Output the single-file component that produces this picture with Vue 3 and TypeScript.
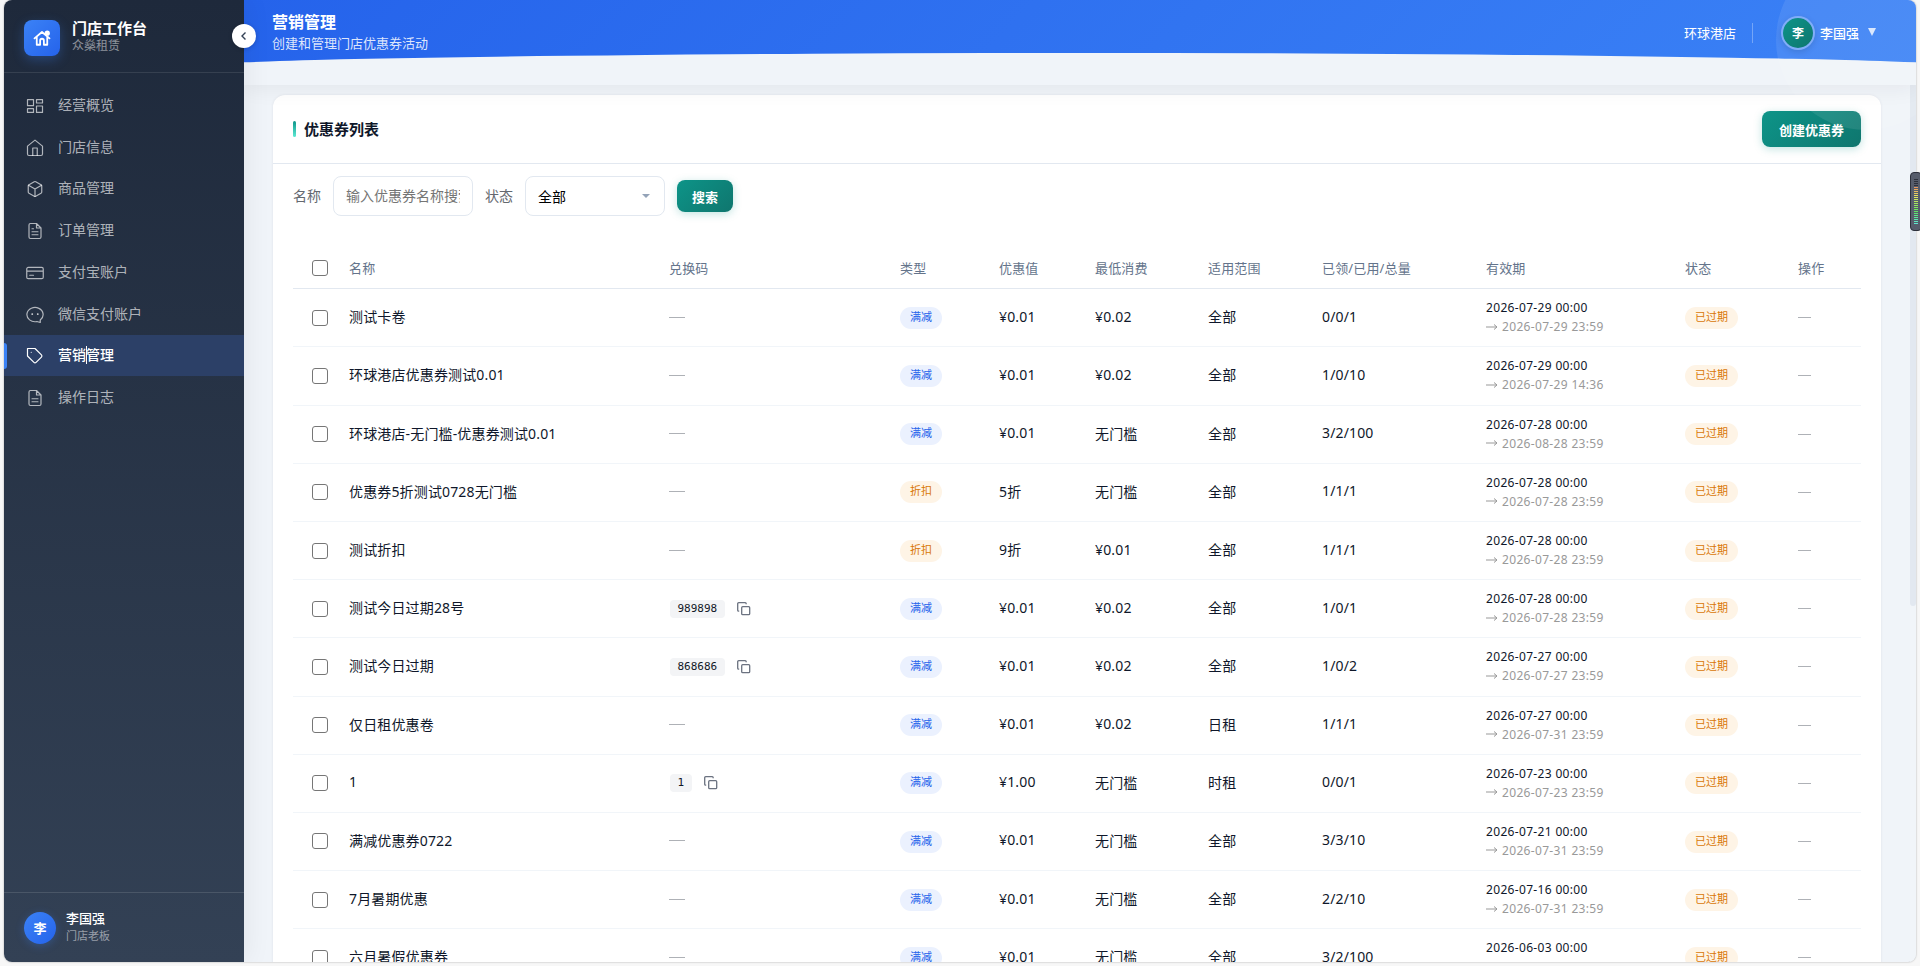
<script setup lang="ts">
interface MenuItem { label: string; icon: string[] }
interface Coupon {
  name: string
  code: string
  type: string
  value: string
  min: string
  scope: string
  usage: string
  from: string
  to: string
}

const doc = 'M14 2H6a2 2 0 0 0-2 2v16a2 2 0 0 0 2 2h12a2 2 0 0 0 2-2V8zM14 2v6h6'

const menu: MenuItem[] = [
  { label: '经营概览', icon: ['M2 3.5h8v8H2zM14 3.5h8v4.5h-8zM14 12h8v8.5h-8zM2 15.5h8v5H2z'] },
  { label: '门店信息', icon: ['M2 9.500L12 1.500l10 8V20a2 2 0 0 1-2 2H4a2 2 0 0 1-2-2z', 'M9 22V12h6v10'] },
  { label: '商品管理', icon: ['M21 16V8a2 2 0 0 0-1-1.730l-7-4a2 2 0 0 0-2 0l-7 4A2 2 0 0 0 3 8v8a2 2 0 0 0 1 1.730l7 4a2 2 0 0 0 2 0l7-4A2 2 0 0 0 21 16z', 'M3.300 7L12 12l8.700-5M12 22V12'] },
  { label: '订单管理', icon: [doc, 'M16 13H8M16 17H8M10 9H8'] },
  { label: '支付宝账户', icon: ['M3 4.500h18a2 2 0 0 1 2 2v11a2 2 0 0 1-2 2H3a2 2 0 0 1-2-2v-11a2 2 0 0 1 2-2zM1 9.500h22M5 15h5'] },
  { label: '微信支付账户', icon: ['M19 18.700V22l-4.500-1.300A10.800 9.500 0 1 1 19 18.700z', 'M8.300 10.300v.8M15.700 10.300v.8', 'M7.800 10.700h1M15.200 10.700h1'] },
  { label: '营销管理', icon: ['M20.590 13.410l-7.170 7.170a2 2 0 0 1-2.830 0L2 12V2h10l8.590 8.590a2 2 0 0 1 0 2.820z', 'M7 7h.01'] },
  { label: '操作日志', icon: [doc, 'M16 13H8M16 17H8'] },
]
const active = '营销管理'

const columns = ['名称', '兑换码', '类型', '优惠值', '最低消费', '适用范围', '已领/已用/总量', '有效期', '状态', '操作']

const row = (name: string, code: string, type: string, value: string, min: string, scope: string, usage: string, from: string, to: string): Coupon =>
  ({ name, code, type, value, min, scope, usage, from, to })

const coupons: Coupon[] = [
  row('测试卡卷', '', '满减', '¥0.01', '¥0.02', '全部', '0/0/1', '2026-07-29 00:00', '2026-07-29 23:59'),
  row('环球港店优惠券测试0.01', '', '满减', '¥0.01', '¥0.02', '全部', '1/0/10', '2026-07-29 00:00', '2026-07-29 14:36'),
  row('环球港店-无门槛-优惠券测试0.01', '', '满减', '¥0.01', '无门槛', '全部', '3/2/100', '2026-07-28 00:00', '2026-08-28 23:59'),
  row('优惠券5折测试0728无门槛', '', '折扣', '5折', '无门槛', '全部', '1/1/1', '2026-07-28 00:00', '2026-07-28 23:59'),
  row('测试折扣', '', '折扣', '9折', '¥0.01', '全部', '1/1/1', '2026-07-28 00:00', '2026-07-28 23:59'),
  row('测试今日过期28号', '989898', '满减', '¥0.01', '¥0.02', '全部', '1/0/1', '2026-07-28 00:00', '2026-07-28 23:59'),
  row('测试今日过期', '868686', '满减', '¥0.01', '¥0.02', '全部', '1/0/2', '2026-07-27 00:00', '2026-07-27 23:59'),
  row('仅日租优惠卷', '', '满减', '¥0.01', '¥0.02', '日租', '1/1/1', '2026-07-27 00:00', '2026-07-31 23:59'),
  row('1', '1', '满减', '¥1.00', '无门槛', '时租', '0/0/1', '2026-07-23 00:00', '2026-07-23 23:59'),
  row('满减优惠券0722', '', '满减', '¥0.01', '无门槛', '全部', '3/3/10', '2026-07-21 00:00', '2026-07-31 23:59'),
  row('7月暑期优惠', '', '满减', '¥0.01', '无门槛', '全部', '2/2/10', '2026-07-16 00:00', '2026-07-31 23:59'),
  row('六月暑假优惠券', '', '满减', '¥0.01', '无门槛', '全部', '3/2/100', '2026-06-03 00:00', '2026-06-30 23:59'),
]
</script>

<template>
  <div class="desktop">
    <div class="window">
      <aside class="sidebar">
        <div class="brand">
          <div class="brand-logo">
            <svg viewBox="0 0 24 24" width="18" height="18">
              <path d="M2 12.500L12 4l10 8.500M5 10.500V21h4.500v-5.500a2.500 2.500 0 0 1 5 0V21H19V10.500" />
              <circle cx="19" cy="5.500" r="3.500" />
            </svg>
          </div>
          <div class="brand-text">
            <div class="brand-name">门店工作台</div>
            <div class="brand-sub">众燊租赁</div>
          </div>
        </div>
        <nav class="menu">
          <a v-for="m in menu" :key="m.label" class="item" :class="{ active: m.label === active }">
            <svg viewBox="0 0 24 24" width="18" height="18"><path v-for="(d, i) in m.icon" :key="i" :d="d" /></svg>
            <span class="item-label">{{ m.label }}<i v-if="m.label === active" class="caret"></i></span>
          </a>
        </nav>
        <div class="me">
          <div class="me-avatar">李</div>
          <div class="me-text">
            <div class="me-name">李国强</div>
            <div class="me-role">门店老板</div>
          </div>
        </div>
      </aside>

      <section class="main">
        <header class="header">
          <svg class="wave" viewBox="0 0 1672 32" preserveAspectRatio="none"><ellipse cx="836" cy="16" rx="920" ry="16" /><rect y="16" width="1672" height="16" /></svg>
          <div class="orb"></div>
          <div class="titles">
            <h1>营销管理</h1>
            <p>创建和管理门店优惠券活动</p>
          </div>
          <div class="account">
            <span class="store">环球港店</span>
            <span class="avatar">李</span>
            <span class="user">李国强</span>
            <svg class="down" viewBox="0 0 8 8" width="8" height="8"><path d="M0 0h8L4 8z" /></svg>
          </div>
        </header>

        <div class="body">
          <div class="card">
            <div class="card-head">
              <h2><span>优惠券列表</span></h2>
              <button class="btn create">创建优惠券</button>
            </div>
            <div class="filters">
              <label>名称</label>
              <input class="field" type="text" placeholder="输入优惠券名称搜索" />
              <label>状态</label>
              <div class="field select">全部<svg viewBox="0 0 8 4" width="8" height="4"><path d="M0 0h8L4 4z" /></svg></div>
              <button class="btn search">搜索</button>
            </div>
            <div class="table">
              <div class="tr th">
                <span class="check"><i></i></span>
                <span v-for="c in columns" :key="c" class="th-text">{{ c }}</span>
              </div>
              <div v-for="c in coupons" :key="c.name" class="tr td">
                <span class="check"><i></i></span>
                <span class="txt">{{ c.name }}</span>
                <span v-if="c.code" class="code">
                  <code>{{ c.code }}</code>
                  <svg viewBox="0 0 14 14" width="14" height="14"><rect x="4.700" y="4.700" width="8" height="8" rx="1" /><path d="M2.200 9.200H1.700a1 1 0 0 1-1-1V1.700a1 1 0 0 1 1-1h6.500a1 1 0 0 1 1 1v.5" /></svg>
                </span>
                <span v-else class="none wide"></span>
                <span><b class="tag" :class="c.type === '折扣' ? 'orange' : 'blue'">{{ c.type }}</b></span>
                <span class="txt">{{ c.value }}</span>
                <span class="txt">{{ c.min }}</span>
                <span class="txt">{{ c.scope }}</span>
                <span class="txt">{{ c.usage }}</span>
                <span class="dates">
                  <span>{{ c.from }}</span>
                  <span class="to"><svg viewBox="0 0 12 8" width="12" height="8"><path d="M0 4h11M8 1.500L11 4 8 6.500" /></svg>{{ c.to }}</span>
                </span>
                <span><b class="tag orange">已过期</b></span>
                <span class="none"></span>
              </div>
            </div>
          </div>
          <div class="scrollbar"><i></i></div>
        </div>
      </section>
      <button class="collapse"><svg viewBox="0 0 12 12" width="12" height="12"><path d="M7.500 2.500L4 6l3.500 3.500" /></svg></button>
    </div>
    <div class="meter"><i v-for="n in 23" :key="n" :style="{ background: n < 5 ? '#2d303b' : `hsl(${25 + (n - 5) * 8}, 75%, 64%)` }"></i></div>
  </div>
</template>

<style>
body { margin: 0; overflow: hidden; }
</style>

<style scoped>
* { box-sizing: border-box; }
.desktop {
  position: relative;
  width: 1920px;
  height: 966px;
  overflow: hidden;
  padding: 0 4px 4px;
  background: #f7f7f7;
  font-family: "Noto Sans", "Noto Sans CJK SC", sans-serif;
  color: #0f172a;
}
.window {
  position: relative;
  display: flex;
  height: 962px;
  border-radius: 8px;
  overflow: hidden;
  background: #f0f4f9;
  box-shadow: 0 0 2px rgba(0, 0, 0, .35);
}
svg { fill: none; stroke: currentColor; flex: none; }
h1, h2, p { margin: 0; }
button { border: 0; font-family: inherit; }

.sidebar {
  display: flex;
  flex-direction: column;
  width: 240px;
  flex: none;
  background: linear-gradient(180deg, #1e293b, #334155);
  box-shadow: 4px 0 24px rgba(0, 0, 0, .06);
  z-index: 2;
}
.brand {
  display: flex;
  align-items: center;
  gap: 12px;
  height: 73px;
  padding: 3px 20px 0;
  border-bottom: 1px solid rgba(255, 255, 255, .1);
}
.brand-logo {
  display: grid;
  place-items: center;
  width: 36px;
  height: 36px;
  border-radius: 8px;
  background: linear-gradient(135deg, #3b82f6, #2563eb);
  color: #fff;
  box-shadow: 0 4px 12px rgba(59, 130, 246, .3);
}
.brand-logo svg { stroke-width: 2.4; stroke-linejoin: round; stroke-linecap: round; }
.brand-logo circle { fill: #fff; stroke: none; }
.brand-name { font-size: 15px; line-height: 17px; margin-top: -1px; font-weight: 700; color: #fff; }
.brand-sub { font-size: 12px; line-height: 18px; color: rgba(255, 255, 255, .5); }
.menu { flex: 1; padding-top: 11px; }
.item {
  position: relative;
  display: flex;
  align-items: center;
  gap: 14px;
  height: 41.75px;
  padding-left: 22px;
  font-size: 14px;
  color: rgba(255, 255, 255, .65);
}
.item svg { stroke-width: 1.6; stroke-linejoin: round; stroke-linecap: round; margin-top: 2px; }
.item.active { background: #2c4067; color: #fff; font-weight: 500; }
.item.active::before {
  content: "";
  position: absolute;
  left: 0;
  top: 8px;
  width: 3px;
  height: 26px;
  border-radius: 0 3px 3px 0;
  background: #3b82f6;
}
.item-label { position: relative; margin-top: -2px; }
.caret { position: absolute; left: 28px; top: 2px; width: 1px; height: 18px; background: #fff; }
.me {
  display: flex;
  align-items: center;
  gap: 10px;
  height: 70px;
  padding: 0 20px;
  border-top: 1px solid rgba(255, 255, 255, .12);
}
.me-avatar {
  display: grid;
  place-items: center;
  width: 32px;
  height: 32px;
  border-radius: 50%;
  background: linear-gradient(135deg, #3b82f6, #2563eb);
  color: #fff;
  font-size: 13px;
  font-weight: 700;
  box-shadow: 0 2px 8px rgba(59, 130, 246, .3);
}
.me-name { font-size: 13px; line-height: 17px; font-weight: 500; color: #fff; }
.me-role { font-size: 11px; line-height: 18px; color: rgba(255, 255, 255, .5); }

.main { position: relative; display: flex; flex-direction: column; flex: 1; min-width: 0; overflow: hidden; }
.header {
  position: relative;
  display: flex;
  justify-content: space-between;
  height: 85px;
  flex: none;
  padding: 0 40px 0 28px;
  background: linear-gradient(135deg, #2563eb, #3b82f6);
  box-shadow: 0 4px 20px rgba(0, 0, 0, .06);
  color: #fff;
  z-index: 1;
}
.wave { position: absolute; left: 0; top: 53px; width: 100%; height: 32px; fill: #f0f4f9; stroke: none; }
.titles { position: relative; padding-top: 12px; }
.titles h1 { font-size: 16px; line-height: 21px; font-weight: 700; }
.titles p { font-size: 13px; line-height: 20px; color: rgba(255, 255, 255, .85); }
.account { position: relative; display: flex; align-items: center; height: 66px; font-size: 13px; }
.store { padding-right: 16px; border-right: 1px solid rgba(255, 255, 255, .3); line-height: 20px; }
.avatar {
  display: grid;
  place-items: center;
  width: 34px;
  height: 34px;
  margin: 0 5px 0 28px;
  border: 2px solid rgba(255, 255, 255, .3);
  border-radius: 50%;
  background: linear-gradient(135deg, #0d9488, #0f766e);
  background-clip: padding-box;
  font-size: 12px;
  font-weight: 700;
  box-shadow: 0 2px 6px rgba(0, 0, 0, .12);
}
.user { font-weight: 500; margin-top: -1px; }
.down { margin: -2px 0 0 9px; fill: rgba(255, 255, 255, .8); stroke: none; }
.orb {
  position: absolute;
  right: -40px;
  top: -50px;
  width: 180px;
  height: 180px;
  border-radius: 50%;
  background: rgba(255, 255, 255, .09);
  pointer-events: none;
}
.collapse {
  position: absolute;
  left: 228px;
  top: 24px;
  display: grid;
  place-items: center;
  width: 24px;
  height: 24px;
  padding: 0;
  border-radius: 50%;
  background: #fff;
  color: #334155;
  box-shadow: 0 1px 4px rgba(0, 0, 0, .2);
  z-index: 4;
}
.collapse svg { stroke-width: 1.4; }

.body { display: flex; justify-content: space-between; flex: 1; min-height: 0; padding-left: 29px; }
.card {
  width: 1608px;
  height: 1000px;
  margin-top: 10px;
  border-radius: 12px;
  background: #fff;
  box-shadow: 0 0 3px rgba(15, 23, 42, .08);
  position: relative;
  z-index: 0;
}
.scrollbar { width: 6px; background: #f1f5f9; }
.scrollbar i { display: block; height: 521px; background: #e2e8f0; border-radius: 0 0 3px 3px; }
.card-head {
  display: flex;
  justify-content: space-between;
  align-items: center;
  height: 69px;
  padding: 0 20px;
  border-bottom: 1px solid #e2e8f0;
}
.card-head h2 { display: flex; align-items: center; gap: 8px; font-size: 15px; font-weight: 700; }
.card-head h2 span { margin-top: -2px; }
.card-head h2::before { content: ""; width: 3px; height: 16px; border-radius: 2px; background: linear-gradient(180deg, #0d9488, #5eead4); }
.btn {
  color: #fff;
  font-size: 13px;
  font-weight: 700;
  padding: 0;
  border-radius: 8px;
  background: linear-gradient(135deg, #0d9488, #0f766e);
  box-shadow: 0 2px 8px rgba(13, 148, 136, .25);
}
.create { width: 99px; height: 36px; margin-top: -1px; padding-top: 1px; }
.search { width: 56px; height: 32px; }
.filters { display: flex; align-items: center; gap: 12px; padding: 12px 20px 0; font-size: 14px; color: #64686f; }
.filters label { margin-top: -3px; }
.field {
  width: 140px;
  height: 40px;
  padding: 0 12px;
  border: 1px solid #e2e8f0;
  border-radius: 8px;
  background: #fff;
  font-family: inherit;
  font-size: 14px;
  color: #000;
  outline: 0;
}
.field::placeholder { color: #757575; }
input.field { padding-bottom: 1px; }
.select { display: flex; align-items: center; justify-content: space-between; padding-bottom: 1px; }
.select svg { margin: 1px 2px 0 0; fill: #94a3b8; stroke: none; }
.table { margin: 31px 20px 0; }
.tr {
  display: grid;
  grid-template-columns: 56px 320px 231px 99px 96px 113px 114px 164px 199px 113px 1fr;
  align-items: center;
}
.th { height: 42.200px; border-bottom: 1px solid #e2e8f0; font-size: 13px; color: #64748b; }
.th-text { letter-spacing: .15px; margin-top: -1px; }
.td { height: 58.200px; border-bottom: 1px solid #f1f5f9; font-size: 14px; }
.txt { margin-top: -3px; white-space: nowrap; letter-spacing: .15px; }
.check { padding-left: 19px; }
.check i { display: block; width: 16px; height: 16px; border: 1px solid #767676; border-radius: 3px; background: #fff; }
.th .check { padding-top: 1px; }
.code { display: flex; align-items: center; gap: 12px; color: #6b7280; padding-left: 1px; }
.code code {
  height: 18px;
  padding: 0 7.500px;
  border-radius: 4px;
  background: #f3f4f6;
  color: #111827;
  font: 11px/18px "DejaVu Sans Mono", monospace;
}
.code svg { stroke-width: 1.3; }
.none { width: 13px; height: 1px; background: #aeb1b6; }
.none.wide { width: 16px; margin-top: -1px; }
.tag {
  display: inline-block;
  height: 22px;
  padding: 0 10px;
  border-radius: 11px;
  font-size: 11px;
  line-height: 20px;
  font-weight: 400;
  vertical-align: middle;
}
.blue { background: #ebf1fe; color: #2563eb; }
.orange { background: #fef4e6; color: #d97706; }
.dates { display: flex; flex-direction: column; margin-top: -1px; font-size: 12px; line-height: 19px; letter-spacing: .33px; white-space: nowrap; }
.to { display: flex; align-items: center; gap: 4px; color: #999; }

.meter {
  position: absolute;
  right: -2px;
  top: 172px;
  display: flex;
  flex-direction: column;
  gap: 1px;
  width: 12px;
  height: 59px;
  padding: 6px 3px;
  border: 1px solid #2d303b;
  border-radius: 4px;
  background: #565c6b;
}
.meter i { flex: none; width: 4px; height: 1px; }
</style>
